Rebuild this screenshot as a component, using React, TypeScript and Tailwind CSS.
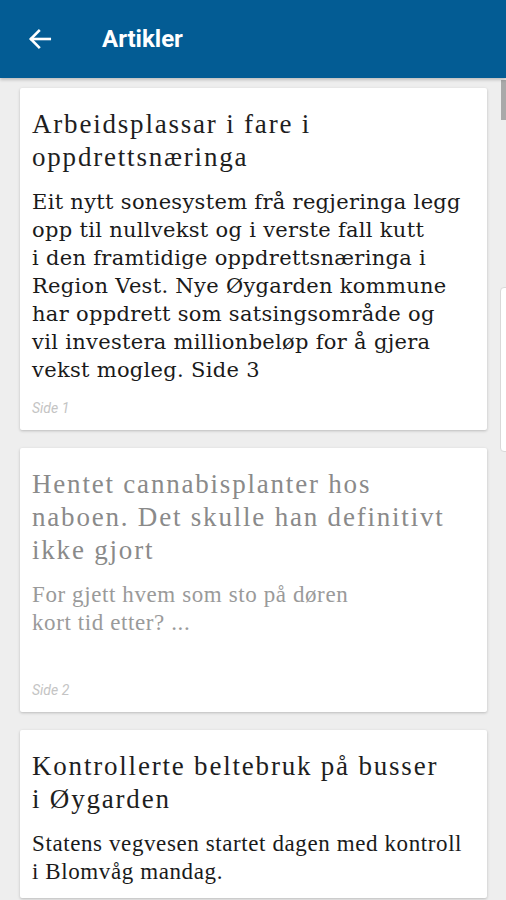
import React from 'react'

type Article = {
    title: string[]
    body: string[]
    page?: string
    read?: boolean
    bodyFont: 'dejavu' | 'liberation'
}

const articles: Article[] = [
    {
        title: ['Arbeidsplassar i fare i', 'oppdrettsnæringa'],
        body: [
            'Eit nytt sonesystem frå regjeringa legg',
            'opp til nullvekst og i verste fall kutt',
            'i den framtidige oppdrettsnæringa i',
            'Region Vest. Nye Øygarden kommune',
            'har oppdrett som satsingsområde og',
            'vil investera millionbeløp for å gjera',
            'vekst mogleg. Side 3',
        ],
        page: 'Side 1',
        bodyFont: 'dejavu',
    },
    {
        title: ['Hentet cannabisplanter hos', 'naboen. Det skulle han definitivt', 'ikke gjort'],
        body: ['For gjett hvem som sto på døren', 'kort tid etter? ...'],
        page: 'Side 2',
        read: true,
        bodyFont: 'liberation',
    },
    {
        title: ['Kontrollerte beltebruk på busser', 'i Øygarden'],
        body: ['Statens vegvesen startet dagen med kontroll', 'i Blomvåg mandag.'],
        bodyFont: 'liberation',
    },
]

const ArticleCard = ({ article }: { article: Article }) => {
    const titleColor = article.read ? 'text-[#8a8a8a]' : 'text-[#1e1e1e]'
    const bodyColor = article.read ? 'text-[#9a9a9a]' : 'text-[#1a1a1a]'
    const bodyClass =
        article.bodyFont === 'dejavu'
            ? "font-['DejaVu_Serif',serif] text-[21px] leading-[28px] tracking-[0.3px]"
            : "font-['Liberation_Serif',serif] text-[23px] leading-[28px] tracking-[0.6px]"

    return (
        <div className='bg-white rounded-[2px] shadow-[0_1px_3px_rgba(0,0,0,0.22)] px-3 pt-5 pb-3'>
            <h2 className={`font-['Liberation_Serif',serif] text-[27px] leading-[33px] font-normal tracking-[1.8px] whitespace-nowrap ${titleColor}`}>
                {article.title.map((line, i) => (
                    <span key={i} className='block'>{line}</span>
                ))}
            </h2>
            <p className={`mt-[14px] whitespace-nowrap ${bodyClass} ${bodyColor}`}>
                {article.body.map((line, i) => (
                    <span key={i} className='block'>{line}</span>
                ))}
            </p>
            {article.page && (
                <p className={`font-['Roboto',sans-serif] italic text-[14px] leading-[20px] text-[#c4c4c4] ${article.read ? 'mt-[43px]' : 'mt-[14px]'}`}>
                    {article.page}
                </p>
            )}
        </div>
    )
}

const App = () => {
    return (
        <div className='h-[900px] w-[506px] overflow-hidden bg-[#eeeeee] flex flex-col'>
            <header className='h-[78px] bg-[#035c94] flex items-center shrink-0 shadow-[0_2px_3px_rgba(0,0,0,0.2)] relative z-10'>
                <svg className='ml-[27px]' width='26' height='26' viewBox='0 0 24 24' fill='none' stroke='white' strokeWidth='2.4' strokeLinecap='square'>
                    <path d='M21 12H4' />
                    <path d='M11 4.5 3.5 12l7.5 7.5' />
                </svg>
                <h1 className="ml-[49px] text-white font-['Roboto',sans-serif] font-bold text-[24px] leading-none">Artikler</h1>
            </header>
            <div className='relative flex-1'>
                <div className='flex flex-col gap-[18px] pl-5 pr-[19px] pt-[10px]'>
                    {articles.map((a, i) => (
                        <ArticleCard key={i} article={a} />
                    ))}
                </div>
                <div className='absolute right-0 top-[2px] w-[5px] h-[40px] bg-[#a9a9a9]' />
                <div className='absolute right-[-4px] top-[209px] w-[10px] h-[165px] bg-white border border-[#d9d9d9] rounded-l-[4px]' />
            </div>
        </div>
    )
}

export default App
